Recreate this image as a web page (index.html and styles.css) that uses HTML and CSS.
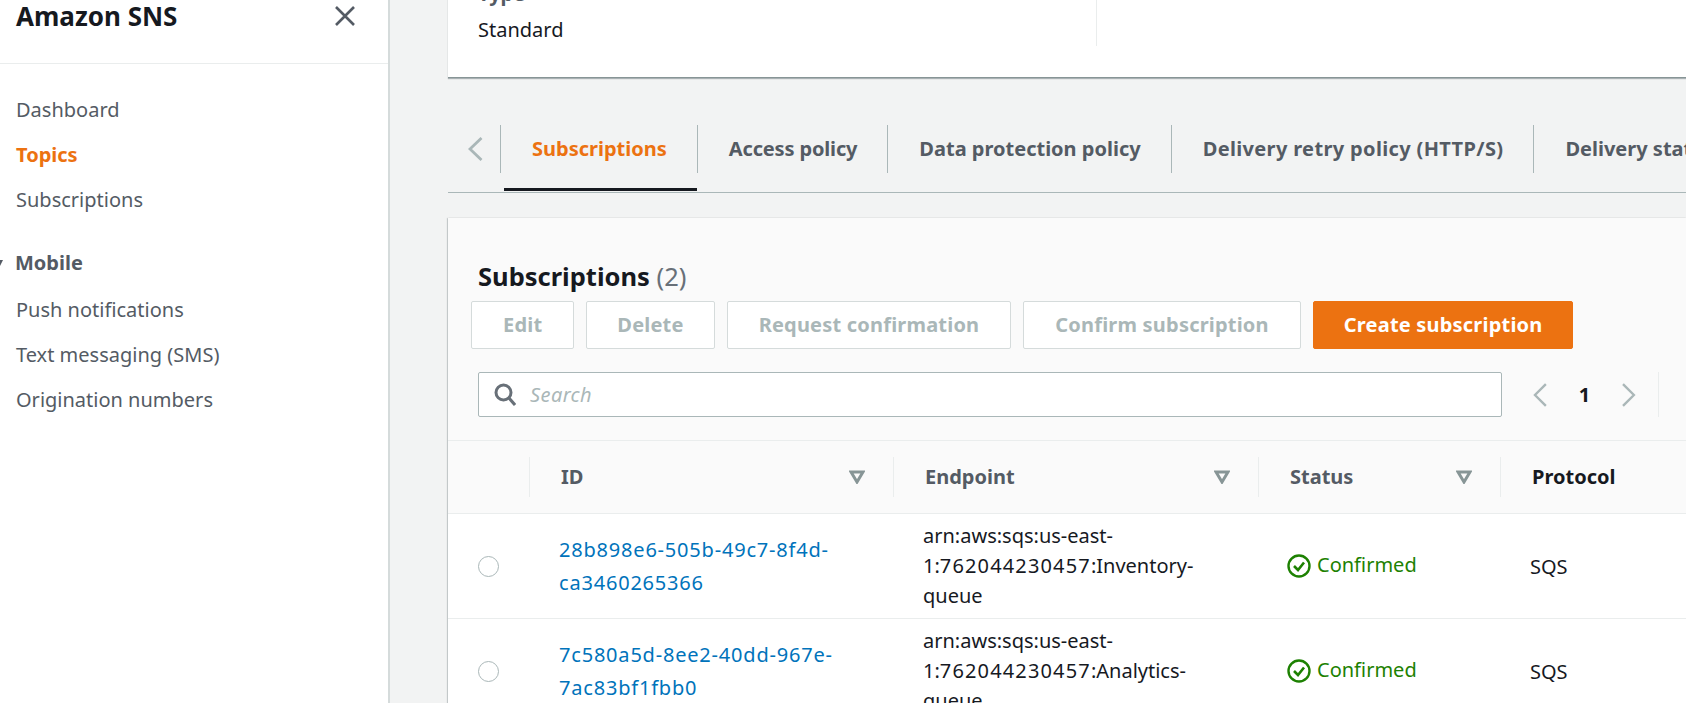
FILE: index.html
```html
<!DOCTYPE html>
<html lang="en">
<head>
  <meta charset="UTF-8">
  <title>Amazon SNS</title>
  <link rel="stylesheet" href="styles.css">
</head>
<body>

<aside class="sidebar">
  <div class="sidebar-head">
    <h2 class="sidebar-title">Amazon SNS</h2>
    <svg class="close-icon" width="20" height="20" viewBox="0 0 20 20"><path d="M1 1l18 18M19 1L1 19" fill="none" stroke="#545b64" stroke-width="2.6"/></svg>
  </div>
  <nav class="nav">
    <a class="nav-link">Dashboard</a>
    <a class="nav-link active">Topics</a>
    <a class="nav-link">Subscriptions</a>
    <div class="nav-group"><span class="nav-caret"></span>Mobile</div>
    <a class="nav-link">Push notifications</a>
    <a class="nav-link">Text messaging (SMS)</a>
    <a class="nav-link">Origination numbers</a>
  </nav>
</aside>

<main class="main">
  <section class="details">
    <div class="details-col">
      <div class="details-label">Type</div>
      <div class="details-value">Standard</div>
    </div>
  </section>

  <div class="tabs">
    <svg class="tabs-prev" width="15" height="24" viewBox="0 0 15 24"><path d="M13.5 1L2 12l11.5 11" fill="none" stroke="#aab7b8" stroke-width="2.8"/></svg>
    <a class="tab active">Subscriptions</a>
    <a class="tab tab-short">Access policy</a>
    <a class="tab">Data protection policy</a>
    <a class="tab tab-long">Delivery retry policy (HTTP/S)</a>
    <a class="tab">Delivery status logging</a>
  </div>

  <section class="panel">
    <div class="panel-head">
      <h2 class="panel-title">Subscriptions <span class="count">(2)</span></h2>
      <div class="actions">
        <button class="btn" disabled>Edit</button>
        <button class="btn btn-tight" disabled>Delete</button>
        <button class="btn" disabled>Request confirmation</button>
        <button class="btn" disabled>Confirm subscription</button>
        <button class="btn btn-tight primary">Create subscription</button>
      </div>
      <div class="filter-row">
        <div class="search">
          <svg width="22" height="23" viewBox="0 0 22 23"><circle cx="9.5" cy="9.5" r="7.5" fill="none" stroke="#687078" stroke-width="3"/><path d="M15 15l6 7" fill="none" stroke="#687078" stroke-width="3"/></svg>
          <span class="search-text">Search</span>
        </div>
        <div class="pager">
          <svg width="14" height="24" viewBox="0 0 14 24"><path d="M13 1L2 12l11 11" fill="none" stroke="#aab7b8" stroke-width="2.4"/></svg>
          <span class="page-num">1</span>
          <svg width="14" height="24" viewBox="0 0 14 24"><path d="M1 1l11 11L1 23" fill="none" stroke="#aab7b8" stroke-width="2.4"/></svg>
        </div>
      </div>
    </div>

    <div class="row head-row">
      <div class="cell-radio"></div>
      <div class="th"><span>ID</span><svg class="sort" width="16" height="14" viewBox="0 0 16 14"><path d="M2 2h12L8 12z" fill="none" stroke="#879596" stroke-width="3"/></svg></div>
      <div class="th"><span>Endpoint</span><svg class="sort" width="16" height="14" viewBox="0 0 16 14"><path d="M2 2h12L8 12z" fill="none" stroke="#879596" stroke-width="3"/></svg></div>
      <div class="th"><span>Status</span><svg class="sort" width="16" height="14" viewBox="0 0 16 14"><path d="M2 2h12L8 12z" fill="none" stroke="#879596" stroke-width="3"/></svg></div>
      <div class="th sorted"><span>Protocol</span></div>
    </div>

    <div class="row body-row">
      <div class="cell-radio"><span class="radio"></span></div>
      <div class="td"><a class="link">28b898e6-505b-49c7-8f4d-ca3460265366</a></div>
      <div class="td endpoint">
        <div>arn:aws:sqs:us-east-</div>
        <div>1:<span class="digits">762044230457</span>:Inventory-</div>
        <div>queue</div>
      </div>
      <div class="td"><span class="status"><svg width="24" height="24" viewBox="0 0 24 24"><circle cx="12" cy="12" r="10.5" fill="none" stroke="#1d8102" stroke-width="2.4"/><path d="M7 12l4 4 6-7.5" fill="none" stroke="#1d8102" stroke-width="2.6"/></svg><span class="status-text">Confirmed</span></span></div>
      <div class="td">SQS</div>
    </div>
    <div class="row body-row">
      <div class="cell-radio"><span class="radio"></span></div>
      <div class="td"><a class="link">7c580a5d-8ee2-40dd-967e-7ac83bf1fbb0</a></div>
      <div class="td endpoint">
        <div>arn:aws:sqs:us-east-</div>
        <div>1:<span class="digits">762044230457</span>:Analytics-</div>
        <div>queue</div>
      </div>
      <div class="td"><span class="status"><svg width="24" height="24" viewBox="0 0 24 24"><circle cx="12" cy="12" r="10.5" fill="none" stroke="#1d8102" stroke-width="2.4"/><path d="M7 12l4 4 6-7.5" fill="none" stroke="#1d8102" stroke-width="2.6"/></svg><span class="status-text">Confirmed</span></span></div>
      <div class="td">SQS</div>
    </div>
  </section>
</main>

</body>
</html>
```

FILE: styles.css
```css
body {
  font-family: "Noto Sans", Arial, sans-serif;
  font-size: 20px;
  display: flex;
  height: 703px;
  margin: 0;
  overflow: hidden;
  background-color: #f2f3f3;
  color: #16191f;
}

.sidebar {
  width: 388px;
  flex-shrink: 0;
  background-color: white;
  border-right: 2px solid #d5dbdb;
}

.sidebar-head {
  display: flex;
  justify-content: space-between;
  height: 63px;
  padding: 0 33px 0 16px;
  border-bottom: 1px solid #eaeded;
}

.sidebar-title {
  margin: 0;
  font-size: 26px;
  line-height: 32px;
  font-weight: 700;
}

.close-icon {
  margin-top: 6px;
}

.nav {
  padding-top: 23px;
}

.nav-link {
  display: block;
  height: 45px;
  line-height: 45px;
  padding-left: 16px;
  color: #545b64;
}

.nav-link.active {
  color: #ec7211;
  font-weight: 700;
}

.nav-group {
  position: relative;
  height: 47px;
  margin-top: 18px;
  line-height: 45px;
  padding-left: 15px;
  font-weight: 700;
  color: #545b64;
}

.nav-caret {
  position: absolute;
  left: -3px;
  top: 20px;
  border: 3.5px solid transparent;
  border-top: 6px solid #545b64;
}

.main {
  flex: 1;
  min-width: 0;
  padding-left: 58px;
}

.details {
  display: flex;
  height: 110px;
  margin-top: -33px;
  background-color: white;
  border-bottom: 1px solid #879596;
  box-shadow: 0 1px 1px rgba(0, 28, 36, 0.3);
}

.details-col {
  width: 618px;
  height: 79px;
  padding-left: 30px;
  border-right: 1px solid #eaeded;
  flex-shrink: 0;
}

.details-label {
  line-height: 30px;
  padding-top: 12px;
  color: #545b64;
  font-weight: 700;
}

.details-value {
  line-height: 30px;
  margin-top: 6px;
}

.tabs {
  display: flex;
  align-items: flex-start;
  height: 67px;
  margin-top: 47px;
  padding-left: 20px;
  border-bottom: 1px solid #aab7b8;
  white-space: nowrap;
}

.tabs-prev {
  flex-shrink: 0;
  margin: 12px 17px 0 0;
}

.tab {
  position: relative;
  height: 48px;
  line-height: 48px;
  padding: 0 30px 0 31px;
  border-left: 1px solid #aab7b8;
  font-weight: 700;
  color: #545b64;
}

.tab-short {
  letter-spacing: -0.15px;
}

.tab-long {
  letter-spacing: 0.35px;
}

.tab.active {
  color: #ec7211;
}

.tab.active::after {
  content: "";
  position: absolute;
  left: 3px;
  right: 0;
  top: 63px;
  height: 3px;
  background-color: #16191f;
}

.panel {
  margin-top: 25px;
  background-color: white;
  box-shadow: 0 1px 1px rgba(0, 28, 36, 0.3), 1px 0 1px rgba(0, 28, 36, 0.15), -1px 0 1px rgba(0, 28, 36, 0.15);
}

.panel-head {
  height: 223px;
  background-color: #fafafa;
  padding: 40px 0 0 30px;
  box-sizing: border-box;
  border-bottom: 1px solid #eaeded;
}

.panel-title {
  margin: 0;
  font-size: 25.5px;
  line-height: 36px;
  font-weight: 700;
}

.count {
  font-weight: 400;
  color: #687078;
}

.actions {
  display: flex;
  gap: 12px;
  margin: 7px 0 0 -7px;
}

.btn {
  height: 48px;
  padding: 0 31px;
  font-family: inherit;
  font-size: 20px;
  line-height: 44px;
  font-weight: 700;
  letter-spacing: 0.2px;
  background-color: white;
  color: #aab7b8;
  border: 1px solid #d5dbdb;
  border-radius: 2px;
}

.btn-tight {
  padding: 0 30px;
}

.btn.primary {
  background-color: #ec7211;
  border-color: #ec7211;
  color: white;
}

.filter-row {
  display: flex;
  margin-top: 23px;
}

.search {
  display: flex;
  align-items: center;
  gap: 14px;
  width: 1024px;
  height: 45px;
  padding-left: 15px;
  box-sizing: border-box;
  background-color: white;
  border: 1px solid #aab7b8;
  border-radius: 2px;
}

.search-text {
  font-style: italic;
  letter-spacing: 0.4px;
  color: #aab7b8;
}

.pager {
  display: flex;
  align-items: center;
  width: 126px;
  height: 45px;
  margin-left: 31px;
  padding-right: 22px;
  box-sizing: border-box;
  border-right: 1px solid #eaeded;
}

.page-num {
  width: 76px;
  text-align: center;
  font-weight: 700;
}

.row {
  display: grid;
  grid-template-columns: 81px 364px 365px 242px 1fr;
  border-bottom: 1px solid #eaeded;
}

.head-row {
  height: 72px;
  align-items: center;
  background-color: #fafafa;
}

.cell-radio {
  display: flex;
  align-items: center;
  justify-content: center;
}

.th {
  display: flex;
  justify-content: space-between;
  align-items: center;
  height: 40px;
  line-height: 38px;
  padding: 0 28px 0 31px;
  border-left: 1px solid #eaeded;
  font-weight: 700;
  color: #545b64;
}

.th.sorted {
  color: #16191f;
}

.body-row {
  height: 104px;
  align-items: center;
}

.radio {
  width: 19px;
  height: 19px;
  border: 1px solid #aab7b8;
  border-radius: 50%;
  background-color: white;
}

.td {
  padding: 0 30px;
}

.link {
  color: #0073bb;
  line-height: 33px;
  display: block;
  letter-spacing: 0.8px;
}

.endpoint {
  line-height: 30px;
  color: #16191f;
}

.digits {
  letter-spacing: 1.15px;
}

.status {
  display: flex;
  align-items: center;
  gap: 6px;
  margin-left: -1px;
  color: #1d8102;
}

.status-text {
  padding-bottom: 4px;
}
```
